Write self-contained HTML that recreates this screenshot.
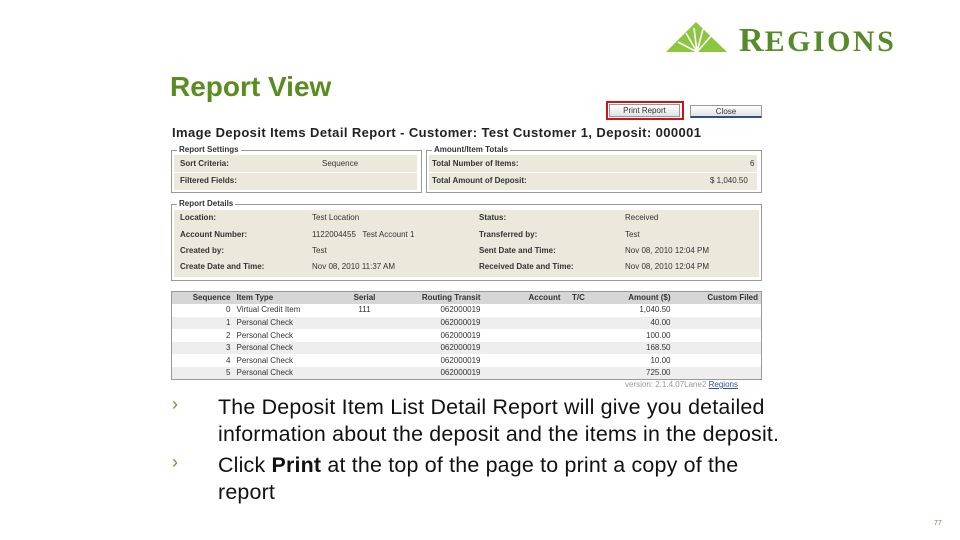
<!DOCTYPE html>
<html><head><meta charset="utf-8"><style>
*{margin:0;padding:0;box-sizing:border-box}
body{width:960px;height:540px;background:#fff;position:relative;overflow:hidden;font-family:"Liberation Sans",sans-serif}
.a{position:absolute;white-space:nowrap}
.s{font-size:8px;color:#333;line-height:10px}
.b{font-weight:bold}
.fs{position:absolute;border:1px solid #999}
.lg{position:absolute;background:#fff;font-size:8px;font-weight:bold;color:#333;padding:0 2px;line-height:8px;top:-5px;left:5px}
.row{position:absolute;background:#ece8dc}
.tb td{font-size:8px;color:#333;height:12.6px;line-height:12px;padding:0 3px}
.big{font-size:21.4px;color:#111;line-height:27px;letter-spacing:0.2px}
</style></head><body>
<svg class="a" style="left:664px;top:20px" width="66" height="34" viewBox="664 20 66 34">
<polygon points="666,52 696,22 727,52" fill="#8cc63f"/>
<g stroke="#fff" stroke-width="1.6">
<line x1="697" y1="52" x2="678" y2="42"/><line x1="697" y1="52" x2="686" y2="33"/>
<line x1="697" y1="52" x2="694" y2="28"/><line x1="697" y1="52" x2="703" y2="29"/>
<line x1="697" y1="52" x2="711" y2="36"/></g>
</svg>
<div class="a" style="left:739px;top:24px;font-family:'Liberation Serif',serif;font-weight:bold;color:#578a2a;font-size:34px;line-height:34px;letter-spacing:1px">R<span style="font-size:30px;letter-spacing:2.5px">EGIONS</span></div>
<div class="a" style="left:170px;top:71px;font-size:28px;font-weight:bold;color:#5a8c1f">Report View</div>

<div class="a" style="left:606px;top:101px;width:78px;height:19px;border:2px solid #d0121b"></div>
<div class="a" style="left:609px;top:104px;width:71px;height:13px;border:1px solid #999;background:linear-gradient(#fff,#e2e2e2);font-size:8px;text-align:center;line-height:12px;color:#333">Print Report</div>
<div class="a" style="left:690px;top:105px;width:72px;height:13px;border:1px solid #999;border-bottom:2px solid #2f4f8f;background:linear-gradient(#fff,#e2e2e2);font-size:8px;text-align:center;line-height:11px;color:#333">Close</div>

<div class="a b" style="left:172px;top:125px;font-size:13px;color:#222;letter-spacing:0.4px">Image Deposit Items Detail Report - Customer: Test Customer 1, Deposit: 000001</div>

<div class="fs" style="left:171px;top:150px;width:251px;height:43px"><span class="lg">Report Settings</span></div>
<div class="row" style="left:174px;top:155px;width:243px;height:17px"></div>
<div class="row" style="left:174px;top:173px;width:243px;height:17px"></div>
<div class="a s b" style="left:180px;top:159px">Sort Criteria:</div>
<div class="a s" style="left:322px;top:159px">Sequence</div>
<div class="a s b" style="left:180px;top:176px">Filtered Fields:</div>

<div class="fs" style="left:426px;top:150px;width:336px;height:43px"><span class="lg">Amount/Item Totals</span></div>
<div class="row" style="left:429px;top:155px;width:328px;height:17px"></div>
<div class="row" style="left:429px;top:173px;width:328px;height:17px"></div>
<div class="a s b" style="left:432px;top:159px">Total Number of Items:</div>
<div class="a s" style="left:750px;top:159px">6</div>
<div class="a s b" style="left:432px;top:176px">Total Amount of Deposit:</div>
<div class="a s" style="left:710px;top:176px">$ 1,040.50</div>

<div class="fs" style="left:171px;top:204px;width:591px;height:77px"><span class="lg">Report Details</span></div>
<div class="row" style="left:174px;top:210px;width:585px;height:67px"></div>
<div class="a s b" style="left:180px;top:213px">Location:</div><div class="a s" style="left:312px;top:213px">Test Location</div>
<div class="a s b" style="left:479px;top:213px">Status:</div><div class="a s" style="left:625px;top:213px">Received</div>
<div class="a s b" style="left:180px;top:230px">Account Number:</div><div class="a s" style="left:312px;top:230px">1122004455 &nbsp; Test Account 1</div>
<div class="a s b" style="left:479px;top:230px">Transferred by:</div><div class="a s" style="left:625px;top:230px">Test</div>
<div class="a s b" style="left:180px;top:246px">Created by:</div><div class="a s" style="left:312px;top:246px">Test</div>
<div class="a s b" style="left:479px;top:246px">Sent Date and Time:</div><div class="a s" style="left:625px;top:246px">Nov 08, 2010 12:04 PM</div>
<div class="a s b" style="left:180px;top:262px">Create Date and Time:</div><div class="a s" style="left:312px;top:262px">Nov 08, 2010 11:37 AM</div>
<div class="a s b" style="left:479px;top:262px">Received Date and Time:</div><div class="a s" style="left:625px;top:262px">Nov 08, 2010 12:04 PM</div>

<table class="a tb" style="left:171px;top:291px;width:591px;border:1px solid #999;border-collapse:collapse">
<tr style="background:#d6d6d6;font-weight:bold"><td style="text-align:right;width:62px">Sequence</td><td style="width:110px">Item Type</td><td style="text-align:center;width:42px">Serial</td><td style="text-align:right;width:98px">Routing Transit</td><td style="text-align:right;width:80px">Account</td><td style="text-align:center;width:30px">T/C</td><td style="text-align:right;width:80px">Amount ($)</td><td style="text-align:right">Custom Filed</td></tr>
<tr><td style="text-align:right">0</td><td>Virtual Credit Item</td><td style="text-align:center">111</td><td style="text-align:right">062000019</td><td></td><td></td><td style="text-align:right">1,040.50</td><td></td></tr>
<tr style="background:#eee"><td style="text-align:right">1</td><td>Personal Check</td><td></td><td style="text-align:right">062000019</td><td></td><td></td><td style="text-align:right">40.00</td><td></td></tr>
<tr><td style="text-align:right">2</td><td>Personal Check</td><td></td><td style="text-align:right">062000019</td><td></td><td></td><td style="text-align:right">100.00</td><td></td></tr>
<tr style="background:#eee"><td style="text-align:right">3</td><td>Personal Check</td><td></td><td style="text-align:right">062000019</td><td></td><td></td><td style="text-align:right">168.50</td><td></td></tr>
<tr><td style="text-align:right">4</td><td>Personal Check</td><td></td><td style="text-align:right">062000019</td><td></td><td></td><td style="text-align:right">10.00</td><td></td></tr>
<tr style="background:#eee"><td style="text-align:right">5</td><td>Personal Check</td><td></td><td style="text-align:right">062000019</td><td></td><td></td><td style="text-align:right">725.00</td><td></td></tr>
</table>
<div class="a" style="left:625px;top:380px;font-size:8px;color:#999">version: 2.1.4.07Lane2 <span style="color:#2f4f9f;text-decoration:underline">Regions</span></div>

<div class="a" style="left:172px;top:394px;font-size:18px;color:#6a9a2a">›</div>
<div class="a" style="left:172px;top:452px;font-size:18px;color:#6a9a2a">›</div>
<div class="a big" style="left:218px;top:394px">The Deposit Item List Detail Report will give you detailed<br>information about the deposit and the items in the deposit.</div>
<div class="a big" style="left:218px;top:452px">Click <b>Print</b> at the top of the page to print a copy of the<br>report</div>
<div class="a" style="left:934px;top:520px;font-size:7px;color:#6a8a2a">77</div>
</body></html>
